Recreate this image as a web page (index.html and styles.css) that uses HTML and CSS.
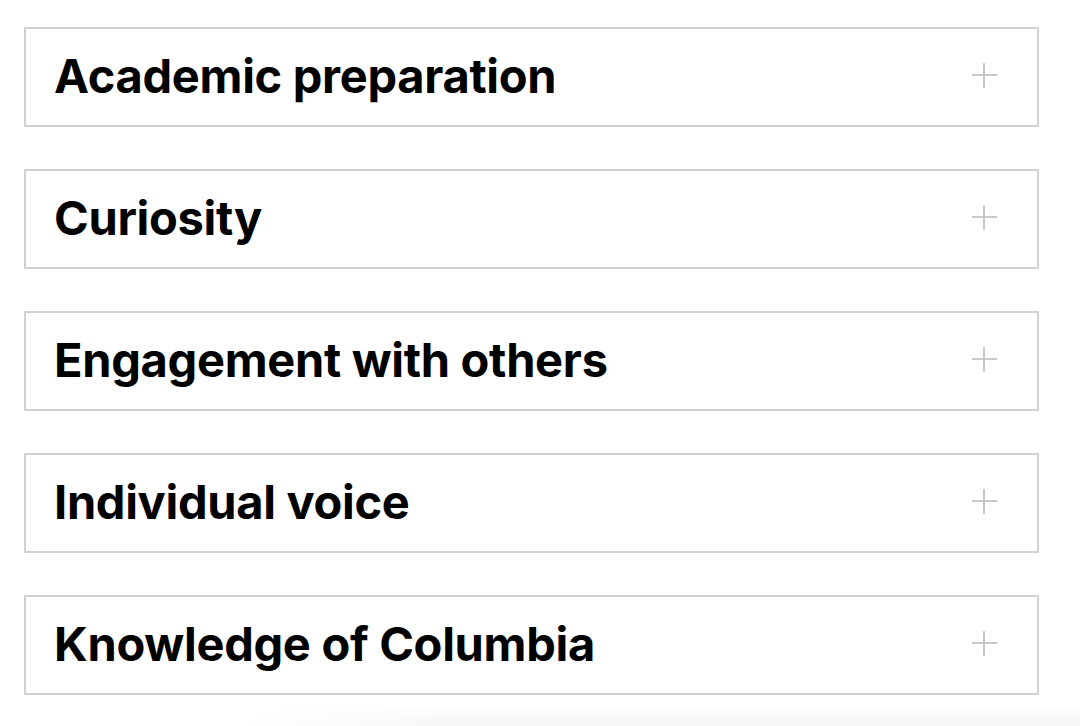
FILE: index.html
```html
<!DOCTYPE html>
<html>

<head>
    <meta charset="UTF-8">
    <title>Criteria</title>
    <link rel="stylesheet" href="styles.css">
</head>

<body>
    <div class="list">
        <div class="item">
            <h3>Academic preparation</h3>
            <span class="plus"></span>
        </div>
        <div class="item">
            <h3>Curiosity</h3>
            <span class="plus"></span>
        </div>
        <div class="item">
            <h3>Engagement with others</h3>
            <span class="plus"></span>
        </div>
        <div class="item">
            <h3>Individual voice</h3>
            <span class="plus"></span>
        </div>
        <div class="item">
            <h3>Knowledge of Columbia</h3>
            <span class="plus"></span>
        </div>
    </div>
    <div class="fade"></div>
</body>
</html>
```

FILE: styles.css
```css
* {
    margin: 0;
    padding: 0;
    box-sizing: border-box;
}

body {
    background: #fff;
    font-family: Inter, "Liberation Sans", sans-serif;
    color: #000;
}

.list {
    width: 1015px;
    margin-left: 24px;
    padding-top: 27px;
    display: flex;
    flex-direction: column;
    gap: 42px;
}

.item {
    height: 100px;
    border: 2px solid #d2d2d2;
    display: flex;
    align-items: center;
    justify-content: space-between;
    padding: 0 40px 0 28px;
}

.item h3 {
    font-size: 47px;
    font-weight: 700;
    letter-spacing: -0.3px;
    margin-top: -3px;
}

.plus {
    position: relative;
    width: 25px;
    height: 25px;
    margin-top: -4px;
}

.plus::before,
.plus::after {
    content: "";
    position: absolute;
    background: #c8c8c8;
}

.plus::before {
    left: 0;
    right: 0;
    top: 11px;
    height: 2px;
}

.plus::after {
    top: 0;
    bottom: 0;
    left: 11px;
    width: 2px;
}

/* faint shade along the bottom edge */
.fade {
    position: fixed;
    left: 240px;
    right: 0;
    bottom: 0;
    height: 22px;
    background: linear-gradient(to bottom, rgba(240, 240, 240, 0), rgba(240, 240, 240, 0.6));
    -webkit-mask-image: linear-gradient(to right, transparent, #000 200px);
    mask-image: linear-gradient(to right, transparent, #000 200px);
    pointer-events: none;
}
```
